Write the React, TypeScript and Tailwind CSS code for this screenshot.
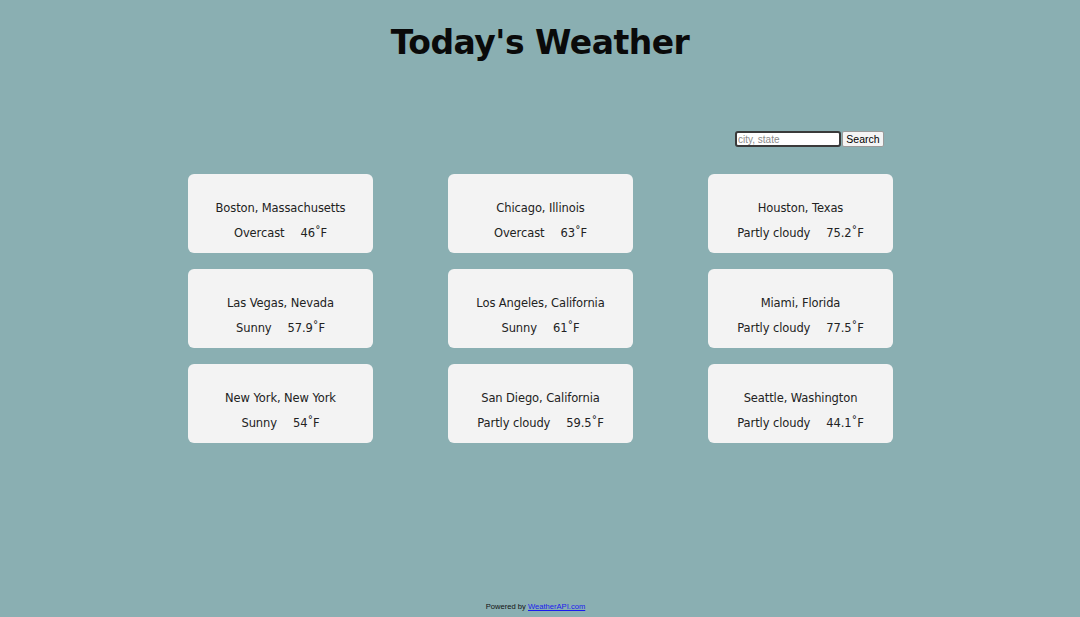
const cities = [
  { name: "Boston, Massachusetts", condition: "Overcast", temp: "46" },
  { name: "Chicago, Illinois", condition: "Overcast", temp: "63" },
  { name: "Houston, Texas", condition: "Partly cloudy", temp: "75.2" },
  { name: "Las Vegas, Nevada", condition: "Sunny", temp: "57.9" },
  { name: "Los Angeles, California", condition: "Sunny", temp: "61" },
  { name: "Miami, Florida", condition: "Partly cloudy", temp: "77.5" },
  { name: "New York, New York", condition: "Sunny", temp: "54" },
  { name: "San Diego, California", condition: "Partly cloudy", temp: "59.5" },
  { name: "Seattle, Washington", condition: "Partly cloudy", temp: "44.1" },
];

export default function App() {
  return (
    <div className="flex min-h-screen flex-col bg-[#8aafb2] font-['DejaVu_Sans',sans-serif]">
      <h1 className="pt-[22px] text-center text-[33px] font-bold leading-[42px] tracking-[-0.5px] text-[#0a0a0a]">
        Today&apos;s Weather
      </h1>

      <div className="mx-auto mt-[67px] flex w-[704px] justify-end pr-[8px]">
        <form
          className="flex items-center"
          onSubmit={(event) => event.preventDefault()}
        >
          <input
            placeholder="city, state"
            className="h-[16px] w-[106px] rounded-[3px] border-2 border-[#3a3a3a] bg-white px-[1px] font-['Liberation_Sans',sans-serif] text-[10px] text-black outline-none placeholder:text-[#8a8a8a]"
          />
          <button
            type="submit"
            className="ml-[1px] h-[16px] w-[42px] rounded-[2px] border border-[#9a9a9a] bg-[#f4f4f4] font-['Liberation_Sans',sans-serif] text-[10.5px] leading-none text-black"
          >
            Search
          </button>
        </form>
      </div>

      <div className="mx-auto mt-[27px] grid w-[704px] grid-cols-[185px_185px_185px] gap-x-[75px] gap-y-[16px]">
        {cities.map((city) => (
          <WeatherCard key={city.name} {...city} />
        ))}
      </div>

      <footer className="mt-auto pb-[5px] pr-[9px] text-center font-['Liberation_Sans',sans-serif] text-[7.6px] leading-[10px] text-[#111]">
        Powered by{" "}
        <a href="#" className="text-[#1a1aee] underline">
          WeatherAPI.com
        </a>
      </footer>
    </div>
  );
}

interface WeatherCardProps {
  name: string;
  condition: string;
  temp: string;
}

function WeatherCard({ name, condition, temp }: WeatherCardProps) {
  return (
    <div className="flex h-[79px] flex-col items-center gap-[9px] rounded-[6px] bg-[#f3f3f3] pt-[26px] text-[11.5px] leading-[16px] tracking-[-0.1px] text-[#222]">
      <p>{name}</p>
      <p className="flex gap-[16px]">
        <span>{condition}</span>
        <span>{temp}˚F</span>
      </p>
    </div>
  );
}
